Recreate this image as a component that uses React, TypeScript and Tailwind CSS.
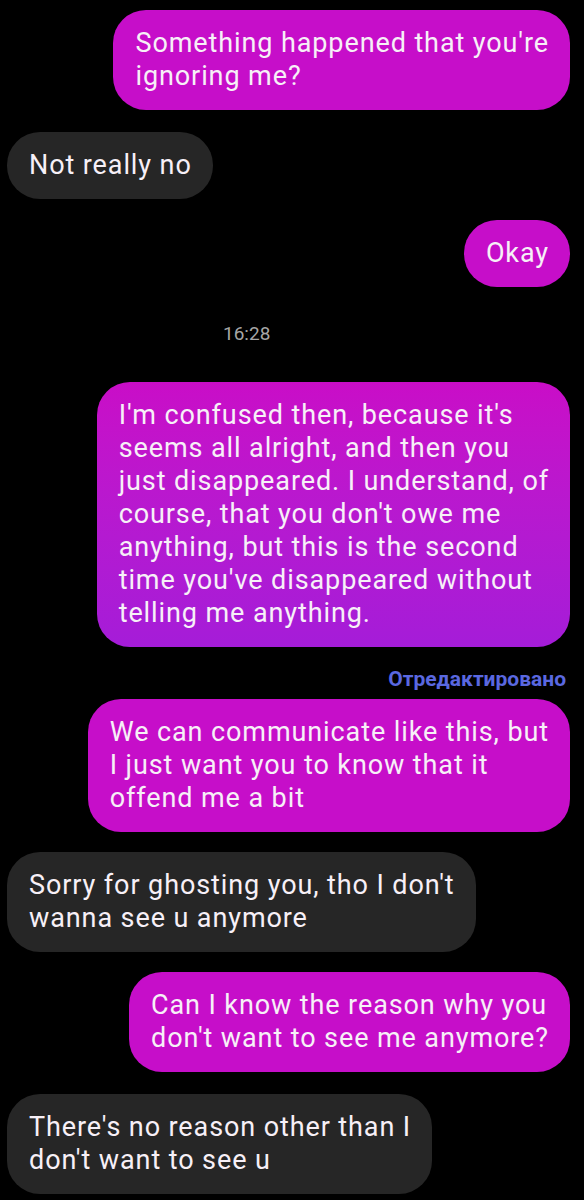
type Side = "in" | "out";

type Msg = {
  side: Side;
  lines: string[];
  gradient?: boolean;
  mt: string;
};

const messages: Msg[] = [
  { side: "out", lines: ["Something happened that you're", "ignoring me?"], mt: "mt-0" },
  { side: "in", lines: ["Not really no"], mt: "mt-[22px]" },
  { side: "out", lines: ["Okay"], mt: "mt-[21px]" },
];

const after: Msg[] = [
  {
    side: "in",
    lines: ["Sorry for ghosting you, tho I don't", "wanna see u anymore"],
    mt: "mt-[20px]",
  },
  {
    side: "out",
    lines: ["Can I know the reason why you", "don't want to see me anymore?"],
    mt: "mt-[20px]",
  },
  {
    side: "in",
    lines: ["There's no reason other than I", "don't want to see u"],
    mt: "mt-[22px]",
  },
];

function Bubble({ msg }: { msg: Msg }) {
  const color =
    msg.side === "in"
      ? "bg-[#262626]"
      : msg.gradient
      ? "bg-gradient-to-b from-[#c90dc7] to-[#a51cd8]"
      : "bg-[#c60ec9]";
  return (
    <div className={`flex ${msg.side === "out" ? "justify-end" : "justify-start"} ${msg.mt}`}>
      <div
        className={`${color} rounded-[33px] pl-[22px] pr-[21px] py-[17px] text-[27px] leading-[33px] tracking-[0.9px] text-[#f7f0f7] whitespace-nowrap`}
      >
        {msg.lines.map((l, i) => (
          <div key={i}>{l}</div>
        ))}
      </div>
    </div>
  );
}

export default function App() {
  return (
    <div
      className="min-h-[1200px] bg-black pt-[10px] pl-[7px] pr-[14px]"
      style={{ fontFamily: "Roboto, 'Noto Sans', sans-serif" }}
    >
      {messages.map((m, i) => (
        <Bubble key={i} msg={m} />
      ))}

      <div className="pl-[216px] mt-[34px] h-[26px] text-[19px] leading-[26px] text-[#a6a6a6]">
        16:28
      </div>

      <Bubble
        msg={{
          side: "out",
          gradient: true,
          mt: "mt-[35px]",
          lines: [
            "I'm confused then, because it's",
            "seems all alright, and then you",
            "just disappeared. I understand, of",
            "course, that you don't owe me",
            "anything, but this is the second",
            "time you've disappeared without",
            "telling me anything.",
          ],
        }}
      />

      <div className="flex justify-end pr-[4px] mt-[21px] text-[21px] leading-[22px] font-bold text-[#5a68e0]">
        Отредактировано
      </div>

      <Bubble
        msg={{
          side: "out",
          mt: "mt-[9px]",
          lines: [
            "We can communicate like this, but",
            "I just want you to know that it",
            "offend me a bit",
          ],
        }}
      />

      {after.map((m, i) => (
        <Bubble key={i} msg={m} />
      ))}
    </div>
  );
}
